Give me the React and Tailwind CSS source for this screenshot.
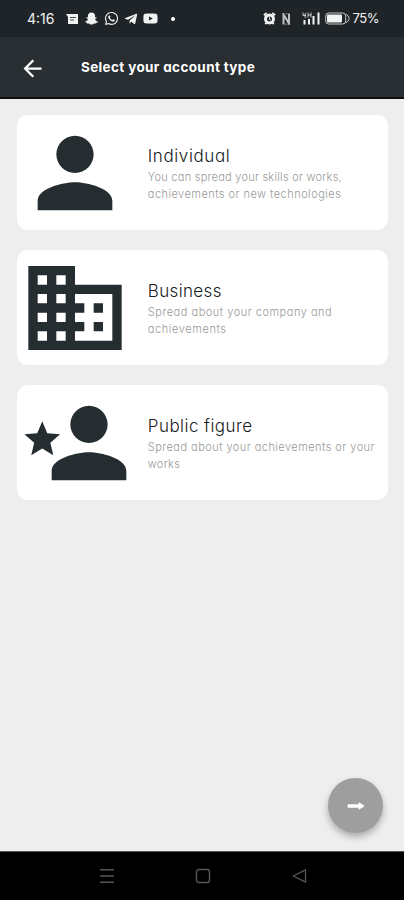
import React from "react";
import { FaSnapchatGhost, FaTelegramPlane, FaWhatsapp, FaYoutube } from "react-icons/fa";
import { MdArrowBack, MdBusiness, MdPerson } from "react-icons/md";

/** Person with a small star on the left side. */
function PublicFigureIcon({ className }) {
  return (
    <svg viewBox="0 0 24 24" fill="currentColor" className={className}>
      <path d="M15 12c2.21 0 4-1.79 4-4s-1.79-4-4-4-4 1.79-4 4 1.79 4 4 4zm0 2c-2.67 0-8 1.34-8 4v2h16v-2c0-2.66-5.33-4-8-4z" />
      <path
        transform="translate(0.4 6.6) scale(0.382)"
        d="M12 17.27L18.18 21l-1.64-7.03L22 9.24l-7.19-.61L12 2 9.19 8.63 2 9.24l5.46 4.73L5.82 21z"
      />
    </svg>
  );
}

const accountTypes = [
  {
    id: "individual",
    title: "Individual",
    titleClass: "tracking-[0.6px]",
    lines: [
      { text: "You can spread your skills or works,", className: "tracking-[0.25px]" },
      { text: "achievements or new technologies", className: "tracking-[0.47px]" },
    ],
    Icon: MdPerson,
  },
  {
    id: "business",
    title: "Business",
    titleClass: "tracking-[0.35px]",
    lines: [
      { text: "Spread about your company and", className: "tracking-[0.52px]" },
      { text: "achievements", className: "tracking-[0.6px]" },
    ],
    Icon: MdBusiness,
  },
  {
    id: "public-figure",
    title: "Public figure",
    titleClass: "tracking-[0.45px]",
    lines: [
      { text: "Spread about your achievements or your", className: "tracking-[0.46px]" },
      { text: "works", className: "tracking-[0.3px]" },
    ],
    Icon: PublicFigureIcon,
  },
];

function StatusBar() {
  return (
    <div className="flex h-[37px] shrink-0 items-center bg-[#1e2427] pl-[27px] pr-[25px] text-[#f1f3f3]">
      <span className="w-[39px] text-[14px] leading-none whitespace-nowrap">4:16</span>
      <svg viewBox="0 0 12 12" className="h-3 w-3">
        <path fill="currentColor" d="M0 1h12v10H2V4z" />
        <path stroke="#1e2427" strokeWidth="0.8" d="M4 4.5h6M4 7h4" />
      </svg>
      <FaSnapchatGhost className="ml-[7px] h-[13px] w-[13px]" />
      <FaWhatsapp className="ml-[6px] h-[15px] w-[15px]" />
      <FaTelegramPlane className="ml-[5px] h-[14px] w-[14px]" />
      <FaYoutube className="ml-[5px] h-[15px] w-[15px]" />
      <span className="ml-[13px] h-1 w-1 rounded-full bg-white" />

      <svg viewBox="0 0 14 14" className="ml-auto h-[13px] w-[13px]">
        <circle cx="7" cy="7.5" r="4.3" fill="none" stroke="currentColor" strokeWidth="3.2" />
        <path stroke="currentColor" strokeWidth="2" d="M1 3.5L4 1M13 3.5L10 1M2.5 13l1.5-2M11.5 13L10 11" />
        <path fill="none" stroke="currentColor" strokeWidth="1" d="M7 5v3l1.5.5" />
      </svg>
      <svg viewBox="0 0 9 12" className="ml-[6px] h-3 w-[9px]" fill="none" stroke="currentColor">
        <path strokeWidth="2" opacity="0.75" d="M1.5 11.5V1.5l5.5 9V.5" />
        <path strokeWidth="1" opacity="0.6" d="M3.5.8h2M3.3 11.2h2" />
      </svg>
      <svg viewBox="0 0 18 13" className="ml-[11px] h-[13px] w-[18px]" fill="none" stroke="currentColor">
        <path strokeWidth="2" d="M2.5 12.5V8M7 12.5V7M11.5 12.5V4M16.5 12.5V.5" />
        <path strokeWidth="1" d="M1 .5v3h3M3.2 1v5M6 .5v5M6 3h3M9 .5v5" opacity="0.8" />
      </svg>
      <svg viewBox="0 0 25 13" className="ml-[5px] h-[13px] w-[25px]">
        <rect x="0.7" y="1" width="20" height="11" rx="3" fill="none" stroke="currentColor" opacity="0.8" />
        <rect x="2" y="2.5" width="15" height="8" rx="1" fill="currentColor" />
        <path fill="none" stroke="currentColor" d="M21 2.5c4 1 4 7 0 8" opacity="0.8" />
      </svg>
      <span className="ml-[3px] text-[13px] leading-none tracking-[-0.5px]">75%</span>
    </div>
  );
}

function AccountCard({ account }) {
  const { Icon } = account;

  return (
    <button
      type="button"
      className="flex h-[115px] w-full items-center rounded-[11px] bg-white pl-[1.5px] text-left"
    >
      <Icon className="h-[112px] w-[112px] shrink-0 text-[#262d30]" />
      <span className="ml-[17px] block pt-[1px]">
        <span className={`mb-[1px] block text-[17px] leading-[24px] font-light whitespace-nowrap text-[#181b1d] ${account.titleClass}`}>
          {account.title}
        </span>
        {account.lines.map((line) => (
          <span
            key={line.text}
            className={`block text-[11px] leading-[16.5px] font-light whitespace-nowrap text-[#999999] ${line.className}`}
          >
            {line.text}
          </span>
        ))}
      </span>
    </button>
  );
}

export default function App() {
  return (
    <div className="flex h-[900px] w-[404px] flex-col overflow-hidden bg-[#eeeeee] font-[Inter,sans-serif] [font-feature-settings:'cv11']">
      <StatusBar />

      <header className="flex h-[62px] shrink-0 items-center border-b-2 border-[#0b0e10] bg-[#282e31] pt-[2px] pl-[18.5px] text-white">
        <MdArrowBack className="h-[27px] w-[27px]" />
        <h1 className="ml-[35.5px] text-[13.5px] leading-none font-bold tracking-[0.36px] whitespace-nowrap">
          Select your account type
        </h1>
      </header>

      <main className="flex flex-1 flex-col pt-4 pr-4 pl-[17.3px]">
        <div className="flex flex-col gap-5">
          {accountTypes.map((account) => (
            <AccountCard key={account.id} account={account} />
          ))}
        </div>

        <button
          type="button"
          aria-label="Continue"
          className="mt-auto mr-[5px] mb-[18px] flex h-[55px] w-[55px] items-center justify-center self-end rounded-full bg-[#9e9e9e] shadow-[0_4px_7px_rgba(0,0,0,0.28)]"
        >
          <svg viewBox="0 0 18 10" className="h-[10px] w-[18px]" fill="white" stroke="white" strokeLinejoin="round">
            <path d="M1 3.8h11V1.8L17 5l-5 3.2V6.2H1z" />
          </svg>
        </button>
      </main>

      <nav className="flex h-[49px] shrink-0 items-center justify-between border-t border-[#555555] bg-black pr-[97px] pl-[99px] text-[#555555]">
        <svg viewBox="0 0 16 16" className="h-4 w-4" stroke="currentColor" strokeWidth="1.4">
          <path d="M1 1.7h14M1 8h14M1 14.3h14" />
        </svg>
        <svg viewBox="0 0 16 16" className="h-4 w-4" fill="none" stroke="currentColor" strokeWidth="1.4">
          <rect x="1.5" y="1.5" width="13" height="13" rx="2.5" />
        </svg>
        <svg viewBox="0 0 16 16" className="h-4 w-4" fill="none" stroke="currentColor" strokeWidth="1.3">
          <path strokeLinejoin="round" d="M14.5 1.8v12.4L2.2 8z" />
        </svg>
      </nav>
    </div>
  );
}
